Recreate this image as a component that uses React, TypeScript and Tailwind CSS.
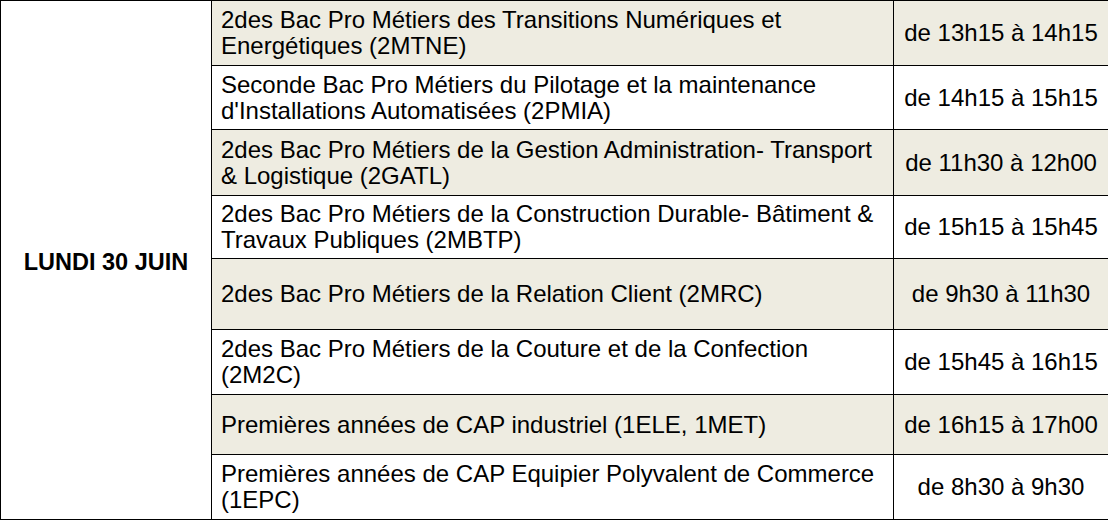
const rows: { lines: string[]; time: string; h: number; shaded: boolean }[] = [
  { lines: ["2des Bac Pro Métiers des Transitions Numériques et", "Energétiques (2MTNE)"], time: "de 13h15 à 14h15", h: 65, shaded: true },
  { lines: ["Seconde Bac Pro Métiers du Pilotage et la maintenance", "d'Installations Automatisées (2PMIA)"], time: "de 14h15 à 15h15", h: 64, shaded: false },
  { lines: ["2des Bac Pro Métiers de la Gestion Administration- Transport", "& Logistique (2GATL)"], time: "de 11h30 à 12h00", h: 66, shaded: true },
  { lines: ["2des Bac Pro Métiers de la Construction Durable- Bâtiment &", "Travaux Publiques (2MBTP)"], time: "de 15h15 à 15h45", h: 63, shaded: false },
  { lines: ["2des Bac Pro Métiers de la Relation Client (2MRC)"], time: "de 9h30 à 11h30", h: 71, shaded: true },
  { lines: ["2des Bac Pro Métiers de la Couture et de la Confection", "(2M2C)"], time: "de 15h45 à 16h15", h: 65, shaded: false },
  { lines: ["Premières années de CAP industriel (1ELE, 1MET)"], time: "de 16h15 à 17h00", h: 60, shaded: true },
  { lines: ["Premières années de CAP Equipier Polyvalent de Commerce", "(1EPC)"], time: "de 8h30 à 9h30", h: 65, shaded: false },
];

export default function App() {
  return (
    <div className="w-[1108px] h-[520px] bg-white overflow-hidden font-['Liberation_Sans',Arial,sans-serif] text-black">
      <table className="w-[1108px] table-fixed border-collapse">
        <colgroup>
          <col className="w-[211px]" />
          <col className="w-[682px]" />
          <col className="w-[215px]" />
        </colgroup>
        <tbody>
          {rows.map((r, i) => (
            <tr key={i} style={{ height: r.h }}>
              {i === 0 && (
                <td
                  rowSpan={rows.length}
                  className="border border-black text-center align-middle font-bold text-[23.5px] leading-[26px] pt-[3px]"
                >
                  LUNDI 30 JUIN
                </td>
              )}
              <td
                className={`border border-black align-middle pl-[9px] pr-1 text-[24px] leading-[26px] ${
                  r.shaded ? "bg-[#eeece1]" : "bg-white"
                }`}
              >
                {r.lines.map((l, j) => (
                  <div key={j} className="whitespace-nowrap">
                    {l}
                  </div>
                ))}
              </td>
              <td
                className={`border border-black align-middle text-center text-[24px] leading-[26px] whitespace-nowrap ${
                  r.shaded ? "bg-[#eeece1]" : "bg-white"
                }`}
              >
                {r.time}
              </td>
            </tr>
          ))}
        </tbody>
      </table>
    </div>
  );
}
